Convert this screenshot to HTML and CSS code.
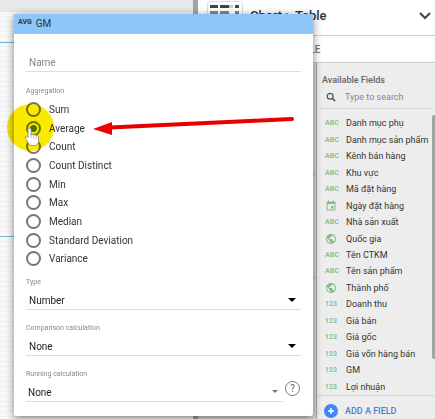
FILE: index.html
```html
<!DOCTYPE html>
<html lang="vi">
<head>
    <meta charset="UTF-8">
    <title>Report editor</title>
    <link rel="stylesheet" href="styles.css">
</head>
<body>
    <svg class="defs" aria-hidden="true">
        <symbol id="globe" viewBox="0 0 24 24">
            <path d="M12 2a10 10 0 1 0 0 20 10 10 0 0 0 0-20zm-1 17.93A8 8 0 0 1 4.21 10.2L9 15v1a2 2 0 0 0 2 2v1.93zm6.9-2.54A2 2 0 0 0 16 16h-1v-3a1 1 0 0 0-1-1H8v-2h2a1 1 0 0 0 1-1V7h2a2 2 0 0 0 2-2v-.41a8 8 0 0 1 2.9 12.8z"/>
        </symbol>
        <symbol id="calendar" viewBox="0 0 24 24">
            <path d="M17 12h-5v5h5v-5zM16 1v2H8V1H6v2H5a2 2 0 0 0-2 2v14a2 2 0 0 0 2 2h14a2 2 0 0 0 2-2V5a2 2 0 0 0-2-2h-1V1h-2zm3 18H5V8h14v11z"/>
        </symbol>
    </svg>

    <main class="report">
        <div class="toolbar"></div>
        <div class="canvas"><div class="selected-chart"></div></div>
    </main>

    <aside class="panel">
        <header class="chart-header">
            <svg class="chart-thumb" viewBox="0 0 36 24">
                <rect x=".5" y="1.500" width="35" height="26" rx="2" fill="#fff" stroke="#ddd"/>
                <path d="M3 6.500h8M13 6.500h9M28 6.500h4" stroke="#444" stroke-width="3"/>
                <path d="M22 6.500h4" stroke="#ccc" stroke-width="3"/>
                <path d="M3 12.500h8M13 12.500h9M28 12.500h4M3 18h8M13 18h9M28 18h4" stroke="#888" stroke-width="3"/>
            </svg>
            <h1>Chart &gt; Table</h1>
            <button class="expand" aria-label="Change chart">
                <svg viewBox="0 0 12 8"><path d="M1 1l5 5 5-5" fill="none" stroke="#444" stroke-width="2"/></svg>
            </button>
        </header>
        <nav class="tabs"><button class="tab">STYLE</button></nav>
        <div class="panel-body">
            <div class="properties">
                <div class="property"></div>
                <div class="property"></div>
            </div>
            <section class="fields">
                <h2>Available Fields</h2>
                <label class="search">
                    <svg viewBox="0 0 12 12"><path d="M7.500 7.500L11 11" stroke="#555" stroke-width="2"/><circle cx="5" cy="5" r="3.500" fill="none" stroke="#555" stroke-width="1.500"/></svg>
                    <input type="search" placeholder="Type to search" aria-label="Search fields">
                </label>
                <ul class="field-list">
                    <li><b>ABC</b>Danh mục phụ</li>
                    <li><b>ABC</b>Danh mục sản phẩm</li>
                    <li><b>ABC</b>Kênh bán hàng</li>
                    <li><b>ABC</b>Khu vực</li>
                    <li><b>ABC</b>Mã đặt hàng</li>
                    <li><svg class="field-icon"><use href="#calendar"/></svg>Ngày đặt hàng</li>
                    <li><b>ABC</b>Nhà sản xuất</li>
                    <li><svg class="field-icon"><use href="#globe"/></svg>Quốc gia</li>
                    <li><b>ABC</b>Tên CTKM</li>
                    <li><b>ABC</b>Tên sản phẩm</li>
                    <li><svg class="field-icon"><use href="#globe"/></svg>Thành phố</li>
                    <li><b>123</b>Doanh thu</li>
                    <li><b>123</b>Giá bán</li>
                    <li><b>123</b>Giá gốc</li>
                    <li><b>123</b>Giá vốn hàng bán</li>
                    <li><b>123</b>GM</li>
                    <li><b>123</b>Lợi nhuận</li>
                </ul>
                <div class="scroll-thumb"></div>
                <button class="add-field">
                    <svg viewBox="0 0 14 14"><circle cx="7" cy="7" r="7" fill="#4285f4"/><path d="M7 4v6M4 7h6" stroke="#fff" stroke-width="1.500"/></svg>
                    ADD A FIELD
                </button>
            </section>
        </div>
    </aside>

    <form class="dialog">
        <header class="dialog-header"><b>AVG</b><span>GM</span></header>
        <div class="dialog-body">
            <input class="name" type="text" placeholder="Name" aria-label="Name">

            <fieldset class="aggregation">
                <legend>Aggregation</legend>
                <div class="options">
                    <label><input type="radio" name="agg">Sum</label>
                    <label><input type="radio" name="agg" checked>Average</label>
                    <label><input type="radio" name="agg">Count</label>
                    <label><input type="radio" name="agg">Count Distinct</label>
                    <label><input type="radio" name="agg">Min</label>
                    <label><input type="radio" name="agg">Max</label>
                    <label><input type="radio" name="agg">Median</label>
                    <label><input type="radio" name="agg">Standard Deviation</label>
                    <label><input type="radio" name="agg">Variance</label>
                </div>
            </fieldset>

            <div class="group">
                <label for="type">Type</label>
                <div class="select"><select id="type"><option>Number</option></select></div>
            </div>
            <div class="group">
                <label for="comparison">Comparison calculation</label>
                <div class="select"><select id="comparison"><option>None</option></select></div>
            </div>
            <div class="group">
                <label for="running">Running calculation</label>
                <div class="with-help">
                    <div class="select muted"><select id="running"><option>None</option></select></div>
                    <button class="help" type="button" aria-label="Help">?</button>
                </div>
            </div>
        </div>
    </form>

    <!-- click highlight, hand cursor and arrow -->
    <div class="click-spot"></div>
    <svg class="hand" viewBox="0 0 16 20">
        <path d="M4 2.500c0-2 3-2 3 0V8c.5-1 2.500-1 2.700.3.600-.8 2.300-.6 2.500.5.800-.6 2.300-.2 2.300 1V14c0 3-1.500 4.500-4 4.500H8c-2 0-3-1-4-3L1.300 11c-.8-1.500.8-2.500 1.800-1.300L4 10.800z" fill="#fff" stroke="#888" stroke-width=".8"/>
        <path d="M7 8v3M9.700 9v2.500M12.200 9.500V12" stroke="#bbb" fill="none"/>
    </svg>
    <svg class="arrow" viewBox="0 0 204 20">
        <path d="M18 11.500L200 3" stroke="#e80000" stroke-width="4" stroke-linecap="round"/>
        <path d="M1 13L20 6v13z" fill="#f00000"/>
    </svg>
</body>
</html>
```

FILE: styles.css
```css
* {
    box-sizing: border-box;
    margin: 0;
    padding: 0;
}

body {
    position: relative;
    display: flex;
    height: 100vh;
    overflow: hidden;
    font-family: Roboto, "Liberation Sans", sans-serif;
    font-size: 10px;
    color: #333;
}

button,
input,
select {
    font: inherit;
    color: inherit;
    border: 0;
    background: none;
    outline: none;
}

.defs {
    position: absolute;
    width: 0;
    height: 0;
}

/* report canvas */
.report {
    flex: 1;
    display: flex;
    flex-direction: column;
    border-right: 5px solid #a5a5a5;
}

.toolbar {
    height: 12px;
    background: #e8e8e8;
}

.canvas {
    flex: 1;
    padding-top: 30px;
    background: repeating-linear-gradient(#f9f9f9 0 4px, #f0f0f0 4px 5px);
}

.selected-chart {
    height: 195px;
    border-top: 1px solid #76b5dc;
    border-bottom: 1px solid #76b5dc;
}

/* right panel */
.panel {
    width: 237px;
    display: flex;
    flex-direction: column;
    background: #fff;
}

.chart-header {
    display: flex;
    align-items: center;
    height: 36px;
    padding: 0 4px 4px 9px;
    border-bottom: 1px solid #ccc;
}

.chart-thumb {
    align-self: flex-start;
    width: 36px;
    height: 24px;
}

.chart-header h1 {
    flex: 1;
    margin-left: 7px;
    font-size: 13px;
    font-weight: 500;
}

.expand {
    width: 12px;
    height: 12px;
}

.expand svg {
    display: block;
    width: 100%;
}

.tabs {
    height: 27px;
    padding-left: 93px;
    border-bottom: 1px solid #ccc;
}

.tab {
    height: 26px;
    font-weight: 500;
    color: #777;
}

.panel-body {
    flex: 1;
    display: flex;
}

.properties {
    flex: 1;
    padding-top: 9px;
    background: #d8d8d8;
    border-right: 1px solid #aaa;
}

.property {
    height: 103px;
    border-bottom: 1px solid #bbb;
}

.fields {
    position: relative;
    width: 118px;
    display: flex;
    flex-direction: column;
    background: #ededed;
    font-size: 9px;
}

.fields h2 {
    padding: 11px 0 0 5px;
    font-size: 9px;
    line-height: 12px;
    font-weight: 500;
    color: #666;
}

.search {
    display: flex;
    align-items: center;
    gap: 9px;
    height: 23px;
    margin: 0 4px 0 3px;
    padding-left: 6px;
    border-bottom: 1px solid #d5d5d5;
}

.search svg {
    width: 10px;
    height: 10px;
}

.search input {
    width: 80px;
}

::placeholder {
    color: #888;
    opacity: 1;
}

.field-list {
    display: flex;
    flex-direction: column;
    height: 280px;
    margin-top: 6px;
    padding-left: 8px;
    list-style: none;
}

.field-list li {
    flex: 1;
    display: flex;
    align-items: center;
    white-space: nowrap;
}

.field-list b {
    flex: none;
    width: 21px;
    font-size: 7px;
    color: #8cc295;
}

.field-icon {
    width: 12px;
    height: 12px;
    margin-right: 9px;
    fill: #82b98b;
}

.scroll-thumb {
    position: absolute;
    top: 52px;
    right: 0;
    width: 3px;
    height: 244px;
    border-radius: 2px 0 0 2px;
    background: #a3a3a3;
}

.add-field {
    flex: 1;
    display: flex;
    align-items: center;
    gap: 7px;
    padding: 6px 0 0 7px;
    border-top: 1px solid #d2d2d2;
    font-weight: 500;
    color: #4a7fd0;
}

.add-field svg {
    width: 14px;
    height: 14px;
}

/* metric dialog */
.dialog {
    position: absolute;
    inset: 14px 122px 3px 14px;
    border-radius: 2px;
    background: #fff;
    box-shadow: 0 2px 8px rgba(0, 0, 0, 0.5);
}

.dialog-header {
    display: flex;
    gap: 4px;
    height: 20px;
    padding-left: 4px;
    line-height: 20px;
    background: #8cc6fb;
}

.dialog-header b {
    font-size: 7px;
    line-height: 17px;
}

.dialog-body {
    display: flex;
    flex-direction: column;
    padding: 20px 12px 0;
}

.name {
    height: 18px;
    margin-bottom: 14px;
    padding-left: 3px;
    border-bottom: 1px solid #ddd;
}

.aggregation {
    border: 0;
}

.aggregation legend,
.group > label {
    display: block;
    font-size: 7px;
    line-height: 10px;
    color: #888;
}

.options {
    display: flex;
    flex-direction: column;
    height: 168px;
    margin: 4px 0 9px;
}

.options label {
    flex: 1;
    display: flex;
    align-items: center;
    gap: 8px;
}

.options input {
    appearance: none;
    width: 15px;
    height: 15px;
    border: 2px solid #777;
    border-radius: 50%;
}

.options input:checked {
    background: radial-gradient(#4a7a2a 0 3px, transparent 4px);
}

.group {
    margin-bottom: 13px;
}

.select {
    position: relative;
    flex: 1;
    margin-top: 4px;
    border-bottom: 1px solid #ddd;
}

.select::after {
    content: "";
    position: absolute;
    top: 7px;
    right: 5px;
    border: 4px solid transparent;
    border-top-color: #000;
    border-bottom: 0;
}

.select select {
    display: block;
    appearance: none;
    width: 100%;
    height: 18px;
    padding-left: 3px;
    color: #222;
}

.muted::after {
    border-width: 3px 3px 0;
    border-top-color: #777;
}

.muted select {
    padding-left: 2px;
}

.with-help {
    display: flex;
    gap: 2px;
    margin-right: 1px;
}

.help {
    width: 15px;
    height: 15px;
    margin-top: 2px;
    border: 1px solid #777;
    border-radius: 50%;
    line-height: 13px;
    color: #666;
}

/* overlays */
.click-spot {
    position: absolute;
    top: 104px;
    left: 7px;
    width: 47px;
    height: 47px;
    border-radius: 50%;
    background: #f9ea00;
    mix-blend-mode: multiply;
}

.hand {
    position: absolute;
    top: 127px;
    left: 24px;
    width: 16px;
    height: 20px;
}

.arrow {
    position: absolute;
    top: 116px;
    left: 92px;
    width: 204px;
    height: 20px;
}
```
